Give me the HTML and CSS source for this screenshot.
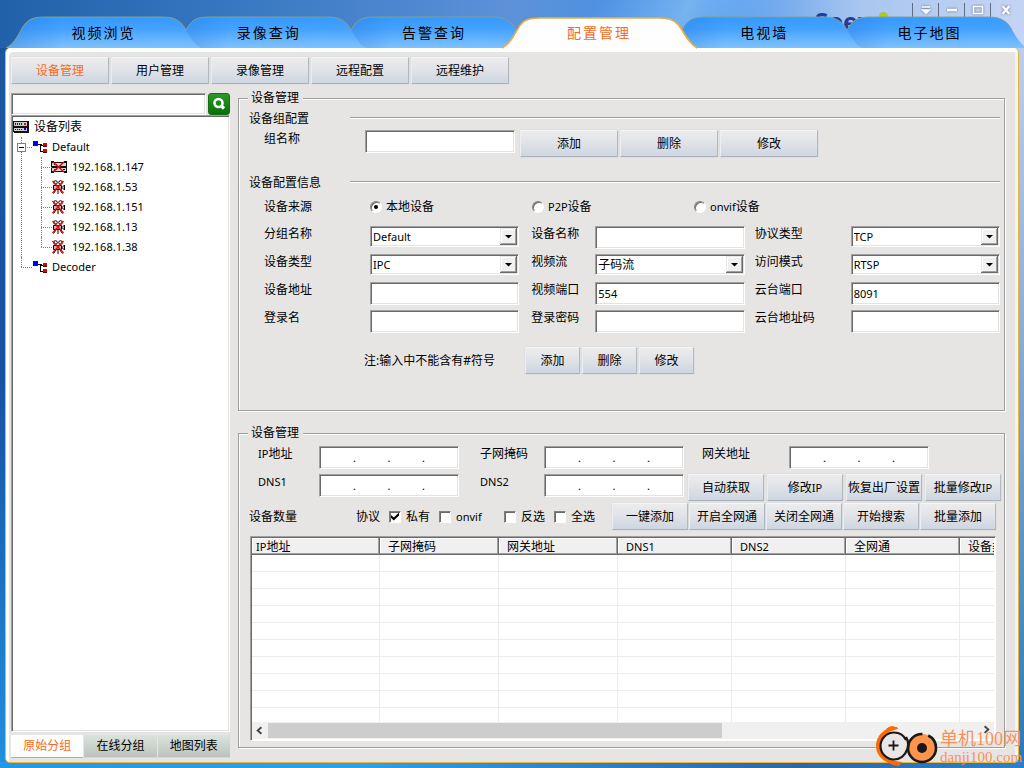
FILE: index.html
```html
<!DOCTYPE html>
<html lang="zh-CN">
<head>
<meta charset="utf-8">
<title>配置管理</title>
<link rel="stylesheet" href="styles.css">
</head>
<body>
<svg class="defs" aria-hidden="true">
  <defs>
    <linearGradient id="tabBlue" x1="0" y1="0" x2="0" y2="1"><stop offset="0" stop-color="#3399ff"/><stop offset=".4" stop-color="#46a3ff"/><stop offset="1" stop-color="#80c2ff"/></linearGradient>
    <linearGradient id="tabEdge" x1="0" x2="1"><stop offset="0" stop-color="#1d6fd0" stop-opacity=".35"/><stop offset=".3" stop-color="#1d6fd0" stop-opacity="0"/></linearGradient>
    <symbol id="tab" viewBox="0 0 195 32">
      <path d="M0 32C7 28 10 23 15 14S24 1 38 1H157C171 1 176 7 180 14S188 28 195 32Z" fill="url(#tabBlue)"/>
      <path d="M0 32C7 28 10 23 15 14S24 1 38 1H157C171 1 176 7 180 14S188 28 195 32Z" fill="url(#tabEdge)"/>
      <path d="M0 32C7 28 10 23 15 14S24 1 38 1H157C171 1 176 7 180 14" fill="none" stroke="#8a9f8c"/>
    </symbol>
    <symbol id="tabOn" viewBox="0 0 195 36">
      <path d="M0 36V32C7 28 10 23 15 14S24 2 38 2H157C171 2 176 7 180 14S188 28 195 32V36Z" fill="#fdfefd"/>
      <path d="M0 32C7 28 10 23 15 14S24 2 38 2H157C171 2 176 7 180 14S188 28 195 32" fill="none" stroke="#e8ae45" stroke-width="1.6"/>
    </symbol>
    <symbol id="arrow" viewBox="0 0 17 17">
      <path d="M0 0H17V17H0Z" fill="#6b6b6b"/><path d="M0 0H16V16H0Z" fill="#e8e8e8"/><path d="M1 1H16V16H1Z" fill="#a0a0a0"/><path d="M1 1H15V15H1Z" fill="#fff"/><path d="M2 2H15V15H2Z" fill="#f0f0f0"/><path d="M5 7H12L8.500 10.500Z" fill="#000"/>
    </symbol>
    <symbol id="group" viewBox="0 0 15 12" shape-rendering="crispEdges">
      <path d="M5 3H9M7 3V10H11M7 4H11" fill="none" stroke="#000"/><path d="M0 0H5V5H0Z" fill="#00f"/><path d="M10 2H14V6H10ZM10 8H14V12H10Z" fill="#e00000"/><path d="M10 5H14V6H10ZM10 11H14V12H10Z" fill="#500"/>
    </symbol>
    <symbol id="server" viewBox="0 0 16 12" shape-rendering="crispEdges">
      <path d="M0 0H15L16 1V12H1L0 11Z" fill="#111"/><path d="M1 1H14V5H1ZM1 7H14V10H1Z" fill="#ccc"/><path d="M2 2H3V4H2ZM4 2H5V4H4ZM6 2H7V4H6ZM8 2H9V4H8ZM2 8H3V9H2ZM4 8H5V9H4ZM6 8H7V9H6ZM8 8H9V9H8Z" fill="#222"/><path d="M11 2H13V4H11Z" fill="red"/><path d="M11 7H13V9H11Z" fill="#00f"/>
    </symbol>
    <symbol id="serverOff" viewBox="0 0 16 14" shape-rendering="crispEdges">
      <path d="M0 1H3V2H13V1H16V13H13V12H3V13H0Z" fill="#111"/><path d="M1 3H15V6H1ZM1 8H15V11H1Z" fill="#d4d4d4"/><path d="M3 4H4V5H3ZM5 4H6V5H5ZM3 9H4V10H3ZM5 9H6V10H5Z" fill="#222"/><path d="M12 9H14V10H12Z" fill="#00f"/><path d="M2 2L13 12M13 2L2 12" stroke="#f00000" stroke-width="1.500" shape-rendering="auto"/>
    </symbol>
    <symbol id="camera" viewBox="0 0 16 14">
      <path d="M2.500 5.500H10.500V9.500H2.500Z" fill="#bbb" stroke="#000"/><circle cx="4.500" cy="2.500" r="1.800" fill="#fff" stroke="#000"/><circle cx="9.500" cy="2.500" r="1.800" fill="#fff" stroke="#000"/><path d="M11 7.500L13.500 5V10Z" fill="#ccc" stroke="#000"/><path d="M5 10L2.500 13.500M7 10V14M9 10L11.500 13.500" stroke="#000"/><path d="M1.500 1L12.500 13M12.500 1L1.500 13" stroke="#f00000" stroke-width="1.400"/>
    </symbol>
  </defs>
</svg>
<div class="app">
  <header class="top">
    <div class="brand">Seew<i></i>ur</div>
    <div class="winbar">
      <button aria-label="菜单"><svg viewBox="0 0 12 10"><path d="M2 2H10M2.500 5H9.500L6 8.500Z" fill="#fff" stroke="#fff" stroke-width="1.500"/></svg></button>
      <button aria-label="最小化"><svg viewBox="0 0 12 10"><path d="M1 5H11" stroke="#fff" stroke-width="2.500"/></svg></button>
      <button aria-label="最大化"><svg viewBox="0 0 12 10"><path d="M1.500 1.500H10.500V8.500H1.500Z" fill="none" stroke="#fff" stroke-width="1.600"/></svg></button>
      <button aria-label="关闭"><svg viewBox="0 0 12 10"><path d="M2.500 1L9.500 9M9.500 1L2.500 9" stroke="#fff" stroke-width="2.300"/></svg></button>
    </div>
    <nav class="tabs">
      <button class="tab"><svg><use href="#tab"/></svg><span>视频浏览</span></button>
      <button class="tab"><svg><use href="#tab"/></svg><span>录像查询</span></button>
      <button class="tab"><svg><use href="#tab"/></svg><span>告警查询</span></button>
      <button class="tab on"><svg><use href="#tabOn"/></svg><span>配置管理</span></button>
      <button class="tab"><svg><use href="#tab"/></svg><span>电视墙</span></button>
      <button class="tab"><svg><use href="#tab"/></svg><span>电子地图</span></button>
    </nav>
  </header>
  <div class="frame">
    <nav class="subtabs">
      <button class="btn on">设备管理</button><button class="btn">用户管理</button><button class="btn">录像管理</button><button class="btn">远程配置</button><button class="btn">远程维护</button>
    </nav>
    <div class="columns">
      <aside class="side">
        <div class="search">
          <input class="field" type="text" aria-label="搜索">
          <button class="go" aria-label="搜索"><svg viewBox="0 0 20 20"><circle cx="9.500" cy="9" r="4" fill="none" stroke="#fff" stroke-width="2.600"/><path d="M12 11.500L15 14.500" stroke="#fff" stroke-width="3.200"/></svg></button>
        </div>
        <div class="tree">
          <div class="node"><svg class="i-server"><use href="#server"/></svg>设备列表</div>
          <ul class="level1">
            <li>
              <div class="node latin"><svg class="i-group"><use href="#group"/></svg>Default</div>
              <button class="toggle" aria-label="折叠"></button>
              <ul class="level2">
                <li class="node latin"><svg class="i-dev"><use href="#serverOff"/></svg>192.168.1.147</li>
                <li class="node latin"><svg class="i-dev"><use href="#camera"/></svg>192.168.1.53</li>
                <li class="node latin"><svg class="i-dev"><use href="#camera"/></svg>192.168.1.151</li>
                <li class="node latin"><svg class="i-dev"><use href="#camera"/></svg>192.168.1.13</li>
                <li class="node latin"><svg class="i-dev"><use href="#camera"/></svg>192.168.1.38</li>
              </ul>
            </li>
            <li><div class="node latin"><svg class="i-group"><use href="#group"/></svg>Decoder</div></li>
          </ul>
        </div>
        <nav class="sidetabs"><button class="on">原始分组</button><button>在线分组</button><button>地图列表</button></nav>
      </aside>
      <main class="main">
        <fieldset class="box config">
          <legend>设备管理</legend>
          <div class="heading"><span>设备组配置</span><hr></div>
          <div class="grouprow">
            <label for="gname">组名称</label><input class="field" id="gname" type="text">
            <div class="buttons"><button class="btn">添加</button><button class="btn">删除</button><button class="btn">修改</button></div>
          </div>
          <div class="heading"><span>设备配置信息</span><hr></div>
          <div class="source">
            <span>设备来源</span>
            <label><input type="radio" name="src" checked>本地设备</label>
            <label><input type="radio" name="src"><span><span class="latin">P2P</span>设备</span></label>
            <label><input type="radio" name="src"><span><span class="latin">onvif</span>设备</span></label>
          </div>
          <div class="form">
            <label for="f1">分组名称</label><div class="combo"><select id="f1"><option>Default</option></select><svg><use href="#arrow"/></svg></div>
            <label class="mid" for="f2">设备名称</label><input class="field" id="f2" type="text">
            <label class="far" for="f3">协议类型</label><div class="combo"><select id="f3"><option>TCP</option></select><svg><use href="#arrow"/></svg></div>
            <label for="f4">设备类型</label><div class="combo"><select id="f4"><option>IPC</option></select><svg><use href="#arrow"/></svg></div>
            <label class="mid" for="f5">视频流</label><div class="combo"><select id="f5" class="cjk"><option>子码流</option></select><svg><use href="#arrow"/></svg></div>
            <label class="far" for="f6">访问模式</label><div class="combo"><select id="f6"><option>RTSP</option></select><svg><use href="#arrow"/></svg></div>
            <label for="f7">设备地址</label><input class="field" id="f7" type="text">
            <label class="mid" for="f8">视频端口</label><input class="field" id="f8" type="text" value="554">
            <label class="far" for="f9">云台端口</label><input class="field" id="f9" type="text" value="8091">
            <label for="f10">登录名</label><input class="field" id="f10" type="text">
            <label class="mid" for="f11">登录密码</label><input class="field" id="f11" type="password">
            <label class="far" for="f12">云台地址码</label><input class="field" id="f12" type="text">
          </div>
          <div class="noterow"><span>注:输入中不能含有#符号</span>
            <div class="buttons small"><button class="btn">添加</button><button class="btn">删除</button><button class="btn">修改</button></div>
          </div>
        </fieldset>
        <fieldset class="box network">
          <legend>设备管理</legend>
          <div class="iprow first">
            <label for="a1"><span class="latin">IP</span>地址</label><div class="ip"><input id="a1"><b>.</b><input aria-label="2"><b>.</b><input aria-label="3"><b>.</b><input aria-label="4"></div>
            <label class="mask" for="a2">子网掩码</label><div class="ip"><input id="a2"><b>.</b><input aria-label="2"><b>.</b><input aria-label="3"><b>.</b><input aria-label="4"></div>
            <label class="gate" for="a3">网关地址</label><div class="ip"><input id="a3"><b>.</b><input aria-label="2"><b>.</b><input aria-label="3"><b>.</b><input aria-label="4"></div>
          </div>
          <div class="iprow">
            <label class="latin" for="a4">DNS1</label><div class="ip"><input id="a4"><b>.</b><input aria-label="2"><b>.</b><input aria-label="3"><b>.</b><input aria-label="4"></div>
            <label class="mask latin" for="a5">DNS2</label><div class="ip"><input id="a5"><b>.</b><input aria-label="2"><b>.</b><input aria-label="3"><b>.</b><input aria-label="4"></div>
            <div class="buttons tools wide"><button class="btn">自动获取</button><button class="btn">修改<span class="latin">IP</span></button><button class="btn">恢复出厂设置</button><button class="btn">批量修改<span class="latin">IP</span></button></div>
          </div>
          <div class="actions">
            <span class="count">设备数量</span><span class="proto">协议</span>
            <label><input type="checkbox" checked>私有</label>
            <label class="latin onvif"><input type="checkbox">onvif</label>
            <label><input type="checkbox">反选</label>
            <label><input type="checkbox">全选</label>
            <div class="buttons tools"><button class="btn">一键添加</button><button class="btn">开启全网通</button><button class="btn">关闭全网通</button><button class="btn">开始搜索</button><button class="btn">批量添加</button></div>
          </div>
          <div class="list">
            <div class="view">
              <table>
                <colgroup><col class="c1"><col class="c2"><col class="c2"><col class="c3"><col class="c3"><col class="c3"><col class="c3"></colgroup>
                <thead><tr><th><span class="latin">IP</span>地址</th><th>子网掩码</th><th>网关地址</th><th class="latin">DNS1</th><th class="latin">DNS2</th><th>全网通</th><th>设备类型</th></tr></thead>
                <tbody>
                  <tr><td></td><td></td><td></td><td></td><td></td><td></td><td></td></tr>
                  <tr><td></td><td></td><td></td><td></td><td></td><td></td><td></td></tr>
                  <tr><td></td><td></td><td></td><td></td><td></td><td></td><td></td></tr>
                  <tr><td></td><td></td><td></td><td></td><td></td><td></td><td></td></tr>
                  <tr><td></td><td></td><td></td><td></td><td></td><td></td><td></td></tr>
                  <tr><td></td><td></td><td></td><td></td><td></td><td></td><td></td></tr>
                  <tr><td></td><td></td><td></td><td></td><td></td><td></td><td></td></tr>
                  <tr><td></td><td></td><td></td><td></td><td></td><td></td><td></td></tr>
                  <tr><td></td><td></td><td></td><td></td><td></td><td></td><td></td></tr>
                  <tr class="rest"><td></td><td></td><td></td><td></td><td></td><td></td><td></td></tr>
                </tbody>
              </table>
            </div>
            <div class="scroll"><svg viewBox="0 0 17 17"><path d="M10 5L6 8.500L10 12" fill="none" stroke="#444" stroke-width="2"/></svg><div class="track"><div class="thumb"></div></div><svg viewBox="0 0 17 17"><path d="M7 4L11 7.500L7 11" fill="none" stroke="#444" stroke-width="2"/></svg></div>
          </div>
        </fieldset>
      </main>
    </div>
  </div>
  <div class="mark">
    <svg viewBox="0 0 64 44"><path d="M22 3C10 2 1 12 1 22S10 40 24 42L27 38C12 36 4 30 5 21S13 7 23 5Z" fill="#ff6a00"/><path d="M11 5Q18-1 22 5ZM14 38Q22 45 26 38Z" fill="#ff6a00"/><circle cx="19" cy="22" r="13.500" fill="#e8e7e5" stroke="#1c1718" stroke-width="2.200" stroke-dasharray="74 11" stroke-dashoffset="-4"/><path d="M18.500 16.500V26.500M13.500 21.500H23.500" stroke="#1c1718" stroke-width="1.800"/><circle cx="47" cy="24" r="14" fill="#ff944d" stroke="#1c1718" stroke-width="2.600" stroke-dasharray="82 6" stroke-dashoffset="16"/><circle cx="47" cy="24" r="5" fill="#1c1718"/><path d="M31 13Q35 20 32 27" fill="none" stroke="#1c1718" stroke-width="2.500"/></svg>
    <div class="marktext"><span>单机100网</span><small>danji100.com</small></div>
  </div>
</div>
</body>
</html>
```
FILE: styles.css
```css
* { box-sizing: border-box; }
body { margin: 0; color: #000; font: 12px/16px "Noto Sans", "Noto Sans CJK SC", sans-serif; }
button, input, select { font: inherit; color: inherit; border-radius: 0; margin: 0; padding: 0; }
button { border: 0; background: none; white-space: nowrap; }
.latin { font-size: 11px; }
.defs { position: absolute; width: 0; height: 0; }

.app {
  position: relative; min-height: 100vh; display: flex; flex-direction: column; padding: 0 5px 5px; overflow: hidden;
  background:
    linear-gradient(115deg, transparent 57%, #77b2f0 66%, transparent 76%) top / 100% 48px no-repeat,
    linear-gradient(90deg, #2061aa, #3a79c4 25%, #5d92d8 50%, #3f8fea 68%, #a9c6f0 84%, #c5d4f4) top / 100% 48px no-repeat,
    linear-gradient(90deg, #2498e8, #2ba0ee 35%, #2e66ad 78%, #2a80cc) bottom / 100% 6px no-repeat,
    linear-gradient(#1b579f, #1751a4 50%, #2090dd) left / 50% 100% no-repeat,
    linear-gradient(#c5d4f4, #88acd8 45%, #2578bd) right / 50% 100% no-repeat;
}
.top { position: relative; height: 48px; flex: none; display: flex; align-items: flex-end; margin: 0 -5px; }
.tabs { flex: 1; display: grid; grid-template-columns: repeat(6, 1fr); padding: 0 12px 0 21px; }
.tab { position: relative; height: 31px; font-size: 14px; letter-spacing: 2px; z-index: 3; }
.tab svg { position: absolute; left: -15px; top: -1px; width: calc(100% + 30px); height: 32px; }
.tab span { position: relative; }
.tab:nth-child(2) { z-index: 2; }
.tab:nth-child(3) { z-index: 1; }
.tab:nth-child(5) { z-index: 2; }
.tab:nth-child(6) { z-index: 1; }
.tab.on { z-index: 5; color: #f86a1c; }
.tab.on svg { height: 36px; }
.brand { position: absolute; right: 108px; top: 5px; color: #203c9c; font: bold 25px/32px "Open Sans", sans-serif; }
.brand i { display: inline-block; width: 9px; height: 9px; border-radius: 50%; background: #a8cc20; vertical-align: 10px; }
.winbar { position: absolute; right: 4px; top: 3px; display: flex; }
.winbar button { width: 26px; height: 14px; border-left: 1px solid #5e6c84; display: grid; place-items: center; }
.winbar button:last-child { width: 30px; }
.winbar svg { width: 12px; height: 10px; filter: drop-shadow(0 0 1px #55657f); }

.frame {
  flex: 1; display: flex; flex-direction: column; padding: 5px 10px 4px 2px;
  background: #e6e5e3; border: 1px solid #e5b83d; border-top: 0; border-radius: 5px;
  box-shadow: inset 3px 4px 0 #fdfdfc, inset -3px 0 0 #f4f3f0;
}
.subtabs { display: flex; gap: 2px; padding: 4px 3px 3px; }
.btn {
  width: 98px; height: 27px; background: linear-gradient(#ececed, #dfe2e7 50%, #ced6e1);
  border: 1px solid; border-color: #f5f5f6 #b2b8c0 #a9b1bc #eceef1; box-shadow: 0 0 1px #bcc3cd;
}
.btn.on { color: #f86a1c; }
.columns { flex: 1; display: flex; gap: 8px; padding: 6px 0 0 3px; }
.side { width: 219px; flex: none; display: flex; flex-direction: column; }
.search { display: flex; gap: 2px; }
.field, .ip {
  width: 100%; min-width: 0; height: 23px; padding: 0 2px; outline: 0; background: #fff; font-size: 11px;
  border: 1px solid; border-color: #a0a0a0 #fff #fff #a0a0a0;
  box-shadow: inset 1px 1px 0 #696969, inset -1px -1px 0 #e3e3e3;
}
.search .field { flex: 1; height: 22px; }
.go { width: 22px; height: 22px; background: linear-gradient(#2c9a24, #087008); border: 1px solid #15700f; border-radius: 3px; }
.go svg { display: block; width: 20px; height: 20px; }
.tree {
  flex: 1; background: #fff; padding: 1px; border: 1px solid; border-color: #a0a0a0 #fff #fff #a0a0a0;
  box-shadow: inset 1px 1px 0 #696969, inset -1px -1px 0 #e3e3e3;
}
.tree ul { list-style: none; margin: 0; padding: 0; }
.tree li { position: relative; }
.node { display: flex; align-items: center; height: 20px; gap: 5px; }
.i-server { width: 16px; height: 12px; }
.i-group { width: 15px; height: 12px; }
.i-dev { width: 16px; height: 14px; }
.level1 > li { padding-left: 20px; }
.level1 > li > .node { gap: 4px; }
.level2 > li { padding-left: 18px; }
.tree li::before { content: ""; position: absolute; left: 8px; top: 0; bottom: 0; border-left: 1px dotted #808080; }
.tree li:last-child::before { bottom: auto; height: 10px; }
.tree li::after { content: ""; position: absolute; left: 8px; top: 10px; width: 11px; border-top: 1px dotted #808080; }
.toggle { position: absolute; z-index: 1; left: 4px; top: 6px; width: 9px; height: 9px; border: 1px solid #808080; background: linear-gradient(#000, #000) center / 5px 1px no-repeat #fff; }
.sidetabs { display: grid; grid-template-columns: repeat(3, 1fr); gap: 1px; padding-top: 3px; }
.sidetabs button { height: 23px; background: linear-gradient(#dce3dd, #b9c4bd); border-bottom: 1px solid #d3d8d4; }
.sidetabs .on { color: #f86a1c; background: #fcfffe; border-bottom-color: #f59a5c; }

.main { flex: 1; min-width: 0; display: flex; flex-direction: column; gap: 14px; padding: 0 3px 10px 0; }
.box { min-width: 0; margin: 0; padding: 0 4px 0 10px; border: 1px solid #9d9d9d; box-shadow: 1px 1px 0 #fff, inset 1px 1px 0 #fff; }
.box legend { padding: 0 4px 0 3px; line-height: 16px; margin-left: -1px; background: #e6e5e3; }
.config { margin-top: -3px; padding-top: 2px; padding-bottom: 36px; }
.network { flex: 1; display: flex; flex-direction: column; padding-top: 5px; padding-right: 3px; }
.heading { display: flex; align-items: center; height: 22px; }
.heading span { width: 101px; }
.heading hr { flex: 1; margin: 0 0 3px; border: 0; border-top: 1px solid #a0a0a0; border-bottom: 1px solid #fff; }
.grouprow { display: flex; align-items: flex-start; padding-left: 15px; height: 42px; }
.grouprow label { width: 101px; padding-top: 1px; }
.grouprow .field { width: 150px; }
.buttons { display: flex; gap: 2px; margin-left: 5px; }
.source { display: grid; grid-template-columns: 106px 162px 162px 1fr; align-items: start; height: 32px; padding: 5px 0 0 15px; }
.source label { display: flex; gap: 4px; align-items: center; }
input[type=radio], input[type=checkbox] {
  appearance: none; width: 12px; height: 12px; flex: none; display: grid; place-items: center; background: #fff;
  border: 1px solid; border-color: #808080 #fff #fff #808080; box-shadow: inset 1px 1px 0 #696969;
}
input[type=radio] { border-radius: 50%; }
input[type=radio]:checked::after { content: ""; width: 4px; height: 4px; border-radius: 50%; background: #000; }
input[type=checkbox]:checked::after { content: ""; width: 8px; height: 8px; background: #000; clip-path: polygon(0 30%, 35% 62%, 100% 0, 100% 36%, 35% 100%, 0 66%); }
.form { display: grid; grid-template-columns: 106px 149fr 76px 149fr 106px 149fr; grid-auto-rows: 23px; row-gap: 5px; padding-left: 15px; }
.mid { padding-left: 12px; }
.far { padding-left: 10px; }
.combo { display: grid; align-items: center; height: 21px; }
.combo select {
  grid-area: 1 / 1; appearance: none; width: 100%; height: 21px; padding-left: 2px; background: #fff; font-size: 11px;
  border: 1px solid; border-color: #a0a0a0 #fff #fff #a0a0a0; box-shadow: inset 1px 1px 0 #696969, inset -1px -1px 0 #e3e3e3;
}
.combo select.cjk { font-size: 12px; }
.combo svg { grid-area: 1 / 1; justify-self: end; margin-right: 2px; width: 17px; height: 17px; pointer-events: none; }
.noterow { display: flex; align-items: center; padding: 14px 0 0 115px; }
.noterow span { width: 156px; }
.small .btn { width: 55px; }

.iprow { display: flex; height: 28px; padding-left: 9px; }
.iprow label { width: 61px; flex: none; }
.iprow .mask { width: 85px; padding-left: 21px; }
.iprow .gate { width: 105px; padding-left: 18px; }
.ip { display: flex; width: 140px; flex: none; align-items: center; }
.ip input { flex: 1; width: 0; border: 0; outline: 0; background: none; height: 16px; }
.ip b { width: 4px; font-weight: normal; text-align: center; }
.tools { gap: 1px; }
.tools .btn { width: 76px; }
.tools.wide { gap: 3px; margin-left: 4px; }
.actions { display: flex; align-items: center; height: 29px; }
.actions .count { width: 107px; }
.actions .proto { width: 33px; }
.actions label { display: flex; align-items: center; gap: 5px; width: 50px; }
.actions .onvif { width: 65px; }
.actions .tools { margin-left: 8px; }
.list {
  flex: 1; display: flex; flex-direction: column; min-width: 0; margin: 5px 5px 6px 1px; background: #fff;
  border: 1px solid; border-color: #a0a0a0 #fff #fff #a0a0a0; box-shadow: inset 1px 1px 0 #696969; padding: 1px;
}
.view { flex: 1; overflow: hidden; display: flex; }
table { table-layout: fixed; width: 822px; flex: none; border-collapse: separate; border-spacing: 0; }
.c1 { width: 128px; }
.c2 { width: 119px; }
.c3 { width: 114px; }
th { height: 17px; padding: 0 0 0 8px; line-height: 15px; text-align: left; font-weight: normal; background: #f0f0f0; border-right: 1px solid #696969; border-bottom: 1px solid #696969; box-shadow: inset -1px -1px 0 #a0a0a0, inset 1px 1px 0 #fff; }
th:first-child { padding-left: 4px; }
td { height: 17px; padding: 0; border-right: 1px solid #ececec; border-bottom: 1px solid #ececec; }
.rest td { height: auto; border-bottom: 0; }
.scroll { display: flex; height: 17px; background: #f0f0f0; }
.scroll svg { width: 16px; height: 17px; flex: none; }
.track { flex: 1; padding: 1px 0; }
.thumb { width: 64%; height: 15px; background: #cdcdcd; }

.mark { position: absolute; right: 4px; bottom: 0; display: flex; gap: 1px; pointer-events: none; }
.mark svg { width: 64px; height: 44px; }
.marktext { width: 80px; color: #f9905c; font-family: "Liberation Serif", "Noto Sans CJK SC", serif; display: flex; flex-direction: column; padding-top: 4px; white-space: nowrap; }
.marktext span { font-size: 18px; line-height: 22px; }
.marktext small { font-size: 15px; line-height: 14px; }
```
